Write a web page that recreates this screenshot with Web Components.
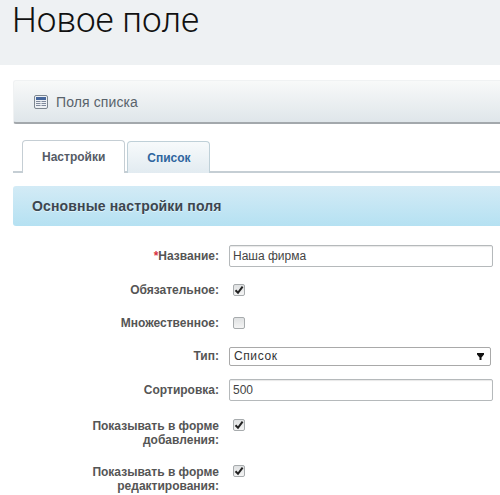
<!DOCTYPE html>
<html lang="ru"><head><meta charset="utf-8"><title>Новое поле</title>
<style>
html,body{margin:0;padding:0;height:495px;overflow:hidden;background:#fff;font-family:"Liberation Sans",Arial,sans-serif}
</style></head><body>
<page-title>Новое поле</page-title>
<page-content>
  <list-toolbar>Поля списка</list-toolbar>
  <tab-strip>
    <tab-item active>Настройки</tab-item>
    <tab-item>Список</tab-item>
  </tab-strip>
  <section-head>Основные настройки поля</section-head>
  <field-grid>
    <field-row first required label="Название:"><text-box>Наша фирма</text-box></field-row>
    <field-row label="Обязательное:"><check-box checked></check-box></field-row>
    <field-row label="Множественное:"><check-box></check-box></field-row>
    <field-row label="Тип:"><select-box>Список</select-box></field-row>
    <field-row sort label="Сортировка:"><text-box>500</text-box></field-row>
    <field-row tall label="Показывать в форме добавления:"><check-box checked></check-box></field-row>
    <field-row tall label="Показывать в форме редактирования:"><check-box checked></check-box></field-row>
  </field-grid>
</page-content>
<script>
function def(name,css,html,extra){
  customElements.define(name,class extends HTMLElement{
    constructor(){super();this.attachShadow({mode:"open"}).innerHTML="<style>"+css+"</style>"+html;}
    connectedCallback(){if(extra)extra(this);}
  });
}
def("page-title",":host{display:block;height:65px;background:#eef1f3;box-sizing:border-box;padding:1px 0 0 12px;font:300 35px/39px Roboto,'Open Sans',sans-serif;color:#111;letter-spacing:0}","<slot></slot>");
def("page-content",":host{display:block;padding:15px 0 0 13px}","<slot></slot>");
def("list-toolbar",`:host{display:flex;align-items:center;gap:8px;height:44px;box-sizing:border-box;padding:0 0 0 20px;border:1px solid #f0f2f3;border-bottom:2px solid #a3a8ac;border-right:0;border-radius:3px 0 0 3px;background:linear-gradient(#f8f9f9,#dfe6ea);font:14px "Liberation Sans",sans-serif;letter-spacing:.1px;color:#59636b}
svg{display:block;flex:none}`,`<svg width="14" height="14" viewBox="0 0 14 14"><rect x=".5" y=".5" width="13" height="13" rx="1.5" fill="#eef1f4" stroke="#7d8790"/><rect x="2" y="2" width="10" height="3" fill="#47679c"/><path d="M2 6.5h10M2 8.5h10M2 10.5h10" stroke="#7f8a9c" stroke-width="1"/><path d="M7 6v6" stroke="#eef1f4"/></svg><slot></slot>`);
def("tab-strip",":host{display:flex;align-items:flex-end;gap:2px;margin-top:16px;box-sizing:border-box;padding-left:9px;border-bottom:2px solid #c5ced4;height:33px}","<slot></slot>");
def("tab-item",`:host{display:block;box-sizing:border-box;height:32px;margin-bottom:-2px;padding:0 18.5px 0 19px;border:1px solid #bfd0d8;border-bottom:0;border-radius:4px 4px 0 0;background:linear-gradient(#f7fafb,#e2ebf1);font:bold 12px/32px "Liberation Sans",sans-serif;color:#2f669f}
:host([active]){background:#fff;color:#555b66;padding:0 19px;border-color:#c5ced4;height:33px;line-height:33px}`,"<slot></slot>");
def("section-head",`:host{display:block;height:40px;margin-top:13px;box-sizing:border-box;padding-left:19px;border-radius:3px 0 0 3px;background:linear-gradient(#d3ebf6,#b5e1f2);font:bold 14px/40px "Liberation Sans",sans-serif;letter-spacing:.15px;color:#3c4650;text-shadow:0 1px 0 rgba(255,255,255,.5)}`,"<slot></slot>");
def("field-grid",":host{display:grid;row-gap:11px;margin-top:19px;padding-right:7px}","<slot></slot>");
def("field-row",`:host{display:grid;grid-template-columns:206px 1fr;column-gap:10px;align-items:center;height:22px}
:host([first]){margin-bottom:1px}
:host([sort]){margin-top:1px}
:host([tall]){height:35px;align-items:start}
.l{text-align:right;font:bold 12px/14px "Liberation Sans",sans-serif;color:#555}
:host([tall]) .l{padding:7px 0 0 70px}
:host([tall]) .c{padding-top:7px}
.c{display:flex;align-items:center;min-width:0}
.r{color:#d9333f;display:none}
:host([required]) .r{display:inline}`,`<div class="l"><span class="r">*</span><span class="t"></span></div><div class="c"><slot></slot></div>`,
function(el){el.shadowRoot.querySelector(".t").textContent=el.getAttribute("label");});
def("text-box",`:host{display:block;flex:1;box-sizing:border-box;height:22px;padding:0 3px;border:1px solid #b5b9bb;border-radius:2px;background:#fff;box-shadow:inset 0 1px 1px #e8e8e8;font:12px/21px "Liberation Sans",sans-serif;color:#444}`,"<slot></slot>");
def("select-box",`:host{display:flex;justify-content:space-between;align-items:center;flex:1;box-sizing:border-box;height:19px;margin-right:2px;padding:0 6px 0 4px;border:1px solid #a9a9a9;border-radius:2px;background:#fff;font:12px/19px "Liberation Sans",sans-serif;color:#333;letter-spacing:.6px}
svg{display:block}`,`<slot></slot><svg width="7" height="7" viewBox="0 0 7 7"><path d="M0 0h7v1.5L4.5 4.5V7h-2V4.5L0 1.5z" fill="#111"/></svg>`);
def("check-box",`:host{display:block;box-sizing:border-box;width:12px;height:12px;margin-left:4px;border:1px solid #a7abad;border-radius:2px;background:linear-gradient(#dfe1e2,#f4f4f4);position:relative}
svg{display:none;position:absolute;left:0;top:0}
:host([checked]) svg{display:block}`,`<svg width="10" height="10" viewBox="0 0 10 10"><path d="M1.5 5.2l2.5 2.6L8.6 1.6" fill="none" stroke="#222" stroke-width="2"/></svg>`);
</script>
</body></html>
